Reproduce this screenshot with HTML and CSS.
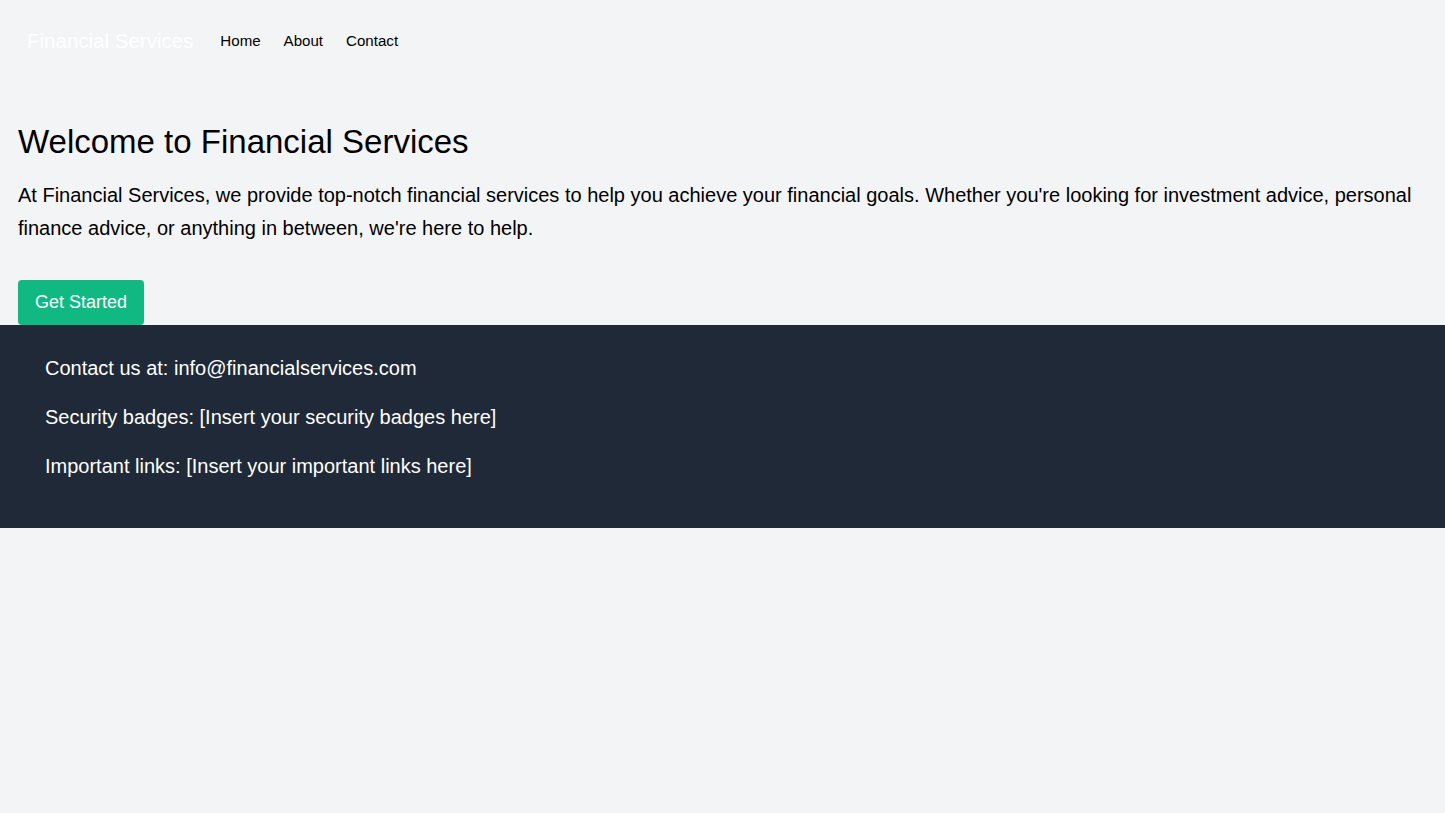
FILE: index.html
```html
<!DOCTYPE html>
<html lang="en">
<head>
<meta charset="utf-8">
<title>Financial Services</title>
<link rel="stylesheet" href="styles.css">
</head>
<body>
<nav class="nav">
  <span class="brand">Financial Services</span>
  <a class="nav-link" href="#">Home</a>
  <a class="nav-link" href="#">About</a>
  <a class="nav-link" href="#">Contact</a>
</nav>
<main class="main">
  <h1 class="title">Welcome to Financial Services</h1>
  <p class="lead">At Financial Services, we provide top-notch financial services to help you achieve your financial goals. Whether you're looking for investment advice, personal finance advice, or anything in between, we're here to help.</p>
  <a class="btn" href="#">Get Started</a>
</main>
<footer class="footer">
  <p class="foot-line">Contact us at: info@financialservices.com</p>
  <p class="foot-line">Security badges: [Insert your security badges here]</p>
  <p class="foot-line">Important links: [Insert your important links here]</p>
</footer>
</body>
</html>
```
FILE: styles.css
```css
* { box-sizing: border-box; }
html, body { margin: 0; padding: 0; }
body {
  background: #f3f4f6;
  font-family: "Liberation Sans", Arial, sans-serif;
  color: #000;
  min-height: 813px;
}
.nav {
  display: flex;
  align-items: center;
  padding: 0 27px;
  height: 82px;
}
.brand {
  color: #fff;
  font-size: 20.5px;
  line-height: 28px;
  margin-right: 27px;
}
.nav-link {
  color: #000;
  text-decoration: none;
  font-size: 15.1px;
  line-height: 20px;
  margin-right: 23px;
}
.main {
  padding: 40px 18px 0;
}
.title {
  margin: 0;
  font-size: 33px;
  line-height: 40px;
  font-weight: 400;
}
.lead {
  margin: 17px 0 36px;
  font-size: 20px;
  line-height: 32.5px;
}
.btn {
  display: inline-block;
  background: #10b981;
  color: #fff;
  text-decoration: none;
  font-size: 18px;
  line-height: 28px;
  padding: 8px 17px 9px;
  border-radius: 4px;
}
.footer {
  background: #1f2937;
  color: #fff;
  padding: 29px 45px 48px;
  display: flex;
  flex-direction: column;
  gap: 21px;
}
.foot-line {
  margin: 0;
  font-size: 20px;
  line-height: 28px;
}
```
